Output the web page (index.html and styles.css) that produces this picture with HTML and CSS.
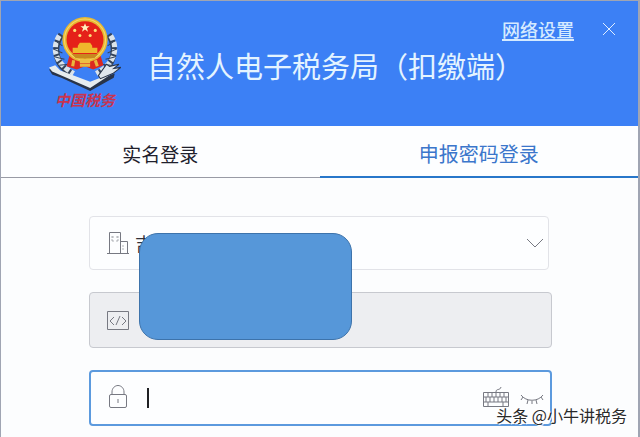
FILE: index.html
```html
<!DOCTYPE html>
<html lang="zh-CN">
<head>
<meta charset="utf-8">
<meta name="viewport" content="width=device-width, initial-scale=1">
<title>自然人电子税务局（扣缴端）</title>
<link rel="stylesheet" href="styles.css">
</head>
<body>
<div class="window">
  <header class="header">
    <div class="brand">
      <svg class="emblem" viewBox="0 0 70 74" aria-hidden="true">
        <g fill="none" stroke="#34435a" stroke-width="6">
          <path d="M12 19C3 32 6 49 22 57"/>
          <path d="M58 19C67 32 64 49 48 57"/>
        </g>
        <g fill="none" stroke="#dbe3ea" stroke-width="5" stroke-dasharray="5 2">
          <path d="M10 20C2 33 6 47 24 57"/>
          <path d="M60 20C68 33 64 47 46 57"/>
        </g>
        <g fill="none" stroke="#34435a" stroke-width="1">
          <path d="M6 25l7 5M4 33l9 4M6 41l9 2M10 49l9-1M64 25l-7 5M66 33l-9 4M64 41l-9 2M60 49l-9-1"/>
        </g>
        <path d="M20 39l-3 11 10 3 8-3 8 3 10-4-3-10z" fill="#dc2820"/>
        <path d="M24 44l-1 6M45 44l2 6M30 49h10" stroke="#e9b63d" stroke-width="3"/>
        <circle cx="35" cy="24" r="22" fill="#e8b832"/>
        <circle cx="35" cy="24" r="20" fill="none" stroke="#f5d76e" stroke-width="1"/>
        <circle cx="35" cy="24" r="18" fill="#e52119"/>
        <path d="M35 8l1.200 3h3.300l-2.600 2 1 3.200-2.900-2-2.900 2 1-3.200-2.600-2h3.300z" fill="#fff2bd"/>
        <g fill="#ffdf79"><circle cx="25" cy="15" r="1.500"/><circle cx="45" cy="15" r="1.500"/><circle cx="30" cy="20" r="1.500"/><circle cx="40" cy="20" r="1.500"/></g>
        <path d="M28 30l2-3h10l2 3v2h5v5H23v-5h5z" fill="#efb82c"/>
        <path d="M22 38h26l-4 4H26z" fill="#c8881f"/>
        <path d="M30 43h10v4H30z" fill="#edbf43"/>
        <path d="M0 53l7-2 4 4 29 11 24-9-1 4-23 13L12 61l-9-3z" fill="#293449"/>
        <path d="M0 51l6-2 5 5 29 11 23-9-23 15L12 59l-9-4z" fill="#e6ecef"/>
        <path d="M48 59l8-11 3 2 9-2-5 4 7-1-8 6-12 5z" fill="#dfe6ed" stroke="#293449" stroke-width="1"/>
      </svg>
      <span class="brand-name">中国税务</span>
    </div>
    <h1 class="title">自然人电子税务局（扣缴端）</h1>
    <div class="actions">
      <a class="network" href="#">网络设置</a>
      <button class="close" type="button" aria-label="关闭">
        <svg viewBox="0 0 14 14"><path d="M1 1l12 12M13 1L1 13"/></svg>
      </button>
    </div>
  </header>
  <nav class="tabs">
    <button class="tab" type="button">实名登录</button>
    <button class="tab tab-active" type="button">申报密码登录</button>
  </nav>
  <form class="form">
    <div class="field field-company">
      <label class="icon" for="company" aria-label="企业">
        <svg viewBox="0 0 24 24"><path d="M3.500 22V1.500h11V22M14.500 10.500h7V22M1 22.500h22"/><path d="M6 6h2M10 6h2M6 10h2M10 10h2M6 5v6M12 5v6M17 14v6" stroke-dasharray="2 1" opacity=".55"/></svg>
      </label>
      <select class="control" id="company"><option>吉</option></select>
      <svg class="chevron" viewBox="0 0 18 10" aria-hidden="true"><path d="M1 1l8 8 8-8"/></svg>
    </div>
    <div class="field field-code">
      <label class="icon" for="code" aria-label="税号">
        <svg viewBox="0 0 24 24"><path d="M1.500 3.500h21v18h-21zM8 9l-4 4 4 4M16 9l4 4-4 4M14 8l-4 9"/></svg>
      </label>
      <input class="control" id="code" type="text" disabled>
    </div>
    <div class="field field-password">
      <label class="icon" for="password" aria-label="密码">
        <svg viewBox="0 0 24 26"><rect x="3.500" y="9.500" width="17" height="13" rx="1.500"/><path d="M6 9.500V7C6 3 9 .5 12 .5S18 3 18 7v2.500M12 14v4"/></svg>
      </label>
      <span class="caret"></span>
      <input class="control" id="password" type="password">
      <button class="tool" type="button" aria-label="软键盘">
        <svg viewBox="0 0 28 24"><path d="M1.500 6.500h25v14h-25zM2 11h24M2 16h24M6 7v4M10 7v4M14 7v4M18 7v4M22 7v4M4 11v5M8 11v5M12 11v5M16 11v5M20 11v5M24 11v5M6 16v4M21 16v4M14 6c0-4 4-1 5-5"/></svg>
      </button>
      <button class="tool tool-eye" type="button" aria-label="显示密码">
        <svg viewBox="0 0 24 22"><path d="M1 8c5 7 17 7 22 0M3 10l-2 3M8 13l-1 4M16 13l1 4M21 10l2 3M12 14v3"/></svg>
      </button>
    </div>
    <div class="mask"></div>
  </form>
  <div class="watermark">头条 @小牛讲税务</div>
</div>
</body>
</html>
```
FILE: styles.css
```css
* {
  box-sizing: border-box;
}

body {
  margin: 0;
  font-family: "Noto Sans CJK SC", sans-serif;
  background: #fcfdfe;
}

button {
  padding: 0;
  border: 0;
  background: none;
  font: inherit;
  cursor: pointer;
}

svg {
  display: block;
  width: 100%;
  fill: none;
  stroke: #777982;
}

.window {
  position: relative;
  min-height: 100vh;
  overflow: hidden;
  border: solid #a0a5b3;
  border-width: 1px 2px 0 1px;
}

.header {
  display: flex;
  height: 125px;
  padding: 14px 22px 0 48px;
  background: #3c80f5;
  color: #e4f4ff;
}

.brand {
  width: 72px;
  text-align: center;
}

.emblem {
  width: 72px;
  height: 76px;
  stroke: none;
}

.brand-name {
  display: block;
  font: italic bold 15px/18px "Noto Sans CJK SC", sans-serif;
  color: #c9344f;
}

.title {
  flex: 1;
  margin: 32px 0 0 26px;
  font-size: 29px;
  line-height: 36px;
  font-weight: 400;
  white-space: nowrap;
}

.actions {
  position: absolute;
  top: 16px;
  right: 22px;
  display: flex;
  align-items: center;
  gap: 28px;
}

.network {
  color: #d5eaff;
  font-size: 18px;
  line-height: 24px;
  font-weight: 500;
  text-decoration-thickness: 2px;
  text-underline-offset: 2px;
}

.close {
  width: 14px;
}

.close svg {
  stroke: #dfedff;
}

.tabs {
  display: flex;
}

.tab {
  flex: 1;
  height: 52px;
  padding-top: 4px;
  border-bottom: 1px solid #999ba5;
  background: #fdfeff;
  color: #20202c;
  font-size: 19px;
}

.tab-active {
  border-bottom: 2px solid #2877ca;
  color: #3b76cb;
  font-size: 20px;
}

.form {
  position: relative;
  display: grid;
  gap: 22px;
  padding: 38px 86px 11px 88px;
}

.field {
  display: flex;
  align-items: center;
  height: 56px;
  padding: 0 4px 0 16px;
  border: 1px solid #c7c9cf;
  border-radius: 4px;
  background: #fdfeff;
}

.field-company {
  height: 54px;
  margin-right: 3px;
  border-color: #e2e3e8;
}

.field-code {
  background: #edeef1;
}

.field-password {
  border: 2px solid #5c9ade;
  padding: 0 6px 0 15px;
}

.icon {
  flex: none;
  width: 24px;
}

.control {
  flex: 1;
  min-width: 0;
  height: 36px;
  margin-left: 5px;
  padding: 0;
  border: 0;
  outline: 0;
  background: transparent;
  appearance: none;
  color: #30303a;
  font: 18px/36px "Noto Sans CJK SC", sans-serif;
}

.chevron {
  width: 18px;
}

.caret {
  width: 2px;
  height: 20px;
  margin-left: 17px;
  background: #202124;
}

.tool {
  width: 28px;
  margin-right: 10px;
}

.tool-eye {
  width: 24px;
  margin-right: 0;
}

.mask {
  position: absolute;
  top: 55px;
  left: 138px;
  width: 213px;
  height: 107px;
  border: 1px solid #3d73ab;
  border-radius: 19px;
  background: #5697d9;
}

.watermark {
  position: absolute;
  right: 11px;
  bottom: 10px;
  color: #292929;
  font-size: 16px;
  line-height: 24px;
  text-shadow: -1px -1px #fff, 1px 1px #fff;
}
```
